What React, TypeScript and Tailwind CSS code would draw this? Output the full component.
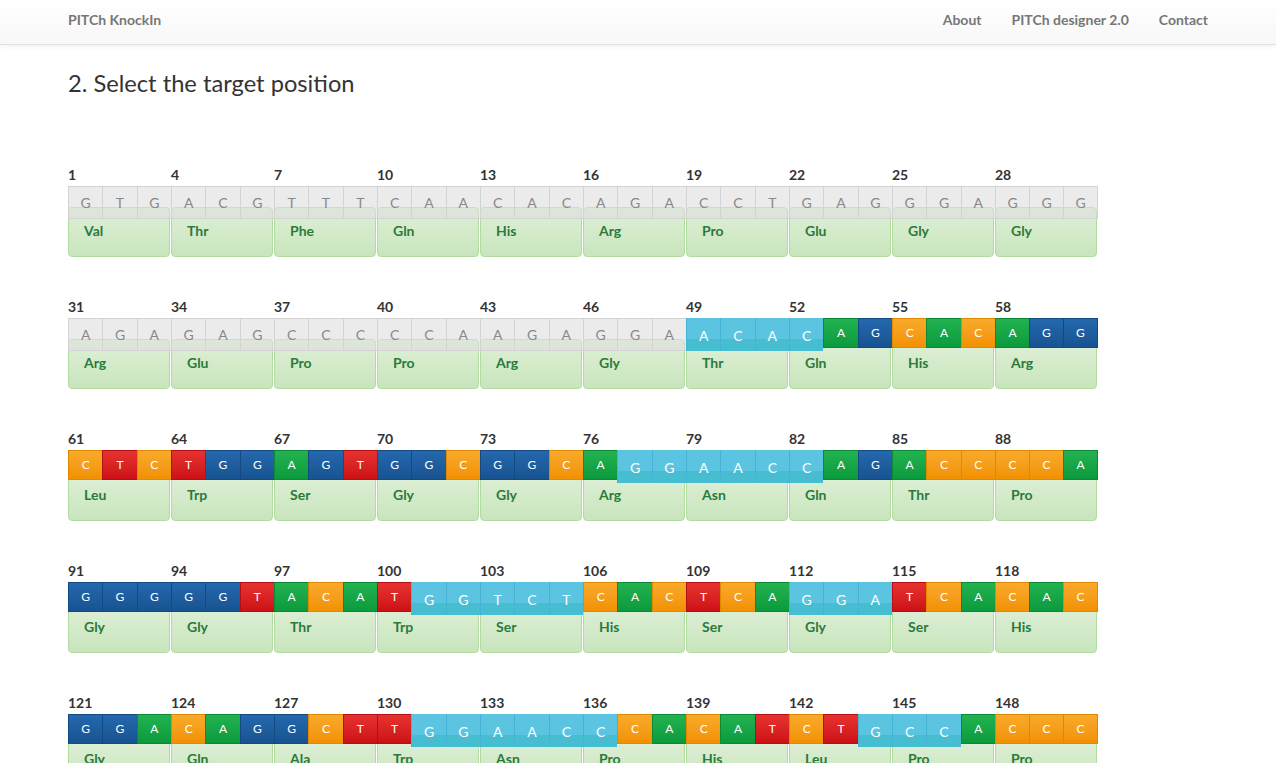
import React from "react";

type RowDef = {
  start: number;
  seq: string;
  aa: string[];
  gray: [number, number][];
  blue: [number, number][];
};

const rows: RowDef[] = [
  {
    start: 1,
    seq: "GTGACGTTTCAACACAGACCTGAGGGAGGG",
    aa: ["Val", "Thr", "Phe", "Gln", "His", "Arg", "Pro", "Glu", "Gly", "Gly"],
    gray: [[0, 29]],
    blue: [],
  },
  {
    start: 31,
    seq: "AGAGAGCCCCCAAGAGGAACACAGCACAGG",
    aa: ["Arg", "Glu", "Pro", "Pro", "Arg", "Gly", "Thr", "Gln", "His", "Arg"],
    gray: [[0, 17]],
    blue: [[18, 21]],
  },
  {
    start: 61,
    seq: "CTCTGGAGTGGCGGCAGGAACCAGACCCCA",
    aa: ["Leu", "Trp", "Ser", "Gly", "Gly", "Arg", "Asn", "Gln", "Thr", "Pro"],
    gray: [],
    blue: [[16, 21]],
  },
  {
    start: 91,
    seq: "GGGGGTACATGGTCTCACTCAGGATCACAC",
    aa: ["Gly", "Gly", "Thr", "Trp", "Ser", "His", "Ser", "Gly", "Ser", "His"],
    gray: [],
    blue: [
      [10, 14],
      [21, 23],
    ],
  },
  {
    start: 121,
    seq: "GGACAGGCTTGGAACCCACATCTGCCACCC",
    aa: ["Gly", "Gln", "Ala", "Trp", "Asn", "Pro", "His", "Leu", "Pro", "Pro"],
    gray: [],
    blue: [
      [10, 15],
      [23, 25],
    ],
  },
];

const colorCls: Record<string, string> = {
  A: "bg-linear-to-b from-[#22b250] to-[#0a9a3d] border-[#0a8a36]",
  G: "bg-linear-to-b from-[#2468ad] to-[#185391] border-[#134a83]",
  C: "bg-linear-to-b from-[#f9aa2a] to-[#f29100] border-[#e08800]",
  T: "bg-linear-to-b from-[#e6322f] to-[#cc1016] border-[#b80e13]",
};

function inRanges(i: number, r: [number, number][]) {
  return r.some(([a, b]) => i >= a && i <= b);
}

function Cell({ nt, kind, last }: { nt: string; kind: "g" | "b" | "c"; last: boolean }) {
  if (kind === "g") {
    return (
      <div
        className={
          "flex h-[33px] flex-1 items-center justify-center border-y border-l border-[#d3d3d3] bg-[rgba(222,222,222,0.6)] text-[14px] text-[#888888] " +
          (last ? "border-r" : "")
        }
      >
        {nt}
      </div>
    );
  }
  if (kind === "b") {
    return (
      <div
        className={
          "flex h-[33px] flex-1 items-center justify-center border-l border-[#44b4d6] bg-[linear-gradient(to_bottom,#5bc5e1_21px,#47bdd2_21px)] pt-[2px] text-[14px] text-white " +
          (last ? "border-r" : "")
        }
      >
        {nt}
      </div>
    );
  }
  return (
    <div
      className={
        "flex h-[30px] flex-1 items-center justify-center border-y border-l text-[12px] text-white " +
        colorCls[nt] +
        (last ? " border-r" : "")
      }
    >
      {nt}
    </div>
  );
}

function SeqRow({ row }: { row: RowDef }) {
  return (
    <div className="flex">
      {row.aa.map((aa, ci) => (
        <div key={ci} className="flex w-[103px] flex-col">
          <div className="h-[21px] text-[14px] font-bold leading-[20px] text-[#333333]">
            {row.start + ci * 3}
          </div>
          <div className="relative z-10 flex h-[33px] items-start">
            {[0, 1, 2].map((k) => {
              const i = ci * 3 + k;
              const kind = inRanges(i, row.gray) ? "g" : inRanges(i, row.blue) ? "b" : "c";
              return <Cell key={k} nt={row.seq[i]} kind={kind} last={i === 29} />;
            })}
          </div>
          <div className="-mt-[12px] flex h-[50px] w-[102px] items-center rounded-[4px] border border-[#b2dba1] bg-linear-to-b from-[#dff0d8] to-[#c8e5bc] pb-[3px] pl-[15px] text-[14px] font-bold text-[#2b7a3b]">
            {aa}
          </div>
        </div>
      ))}
    </div>
  );
}

export default function App() {
  return (
    <div className="min-h-screen bg-white font-['Lato','Open_Sans',sans-serif] text-[#333333]">
      <div className="h-[45px] border-b border-[#e2e2e2] bg-linear-to-b from-white to-[#f7f7f7] shadow-[0_1px_5px_rgba(0,0,0,0.075)]">
        <div className="ml-[68px] flex w-[1140px] items-start justify-between pt-[10px] text-[14px] font-bold leading-[20px] text-[#777777]">
          <span>PITCh KnockIn</span>
          <div className="flex gap-[30px]">
            <span>About</span>
            <span>PITCh designer 2.0</span>
            <span>Contact</span>
          </div>
        </div>
      </div>
      <div className="ml-[68px] w-[1140px]">
        <h3 className="mt-[25px] text-[23.7px] font-normal leading-[26px] text-[#333333]">
          2. Select the target position
        </h3>
        <div className="mt-[69px] flex flex-col gap-[40px] pb-10">
          {rows.map((r) => (
            <SeqRow key={r.start} row={r} />
          ))}
        </div>
      </div>
    </div>
  );
}
